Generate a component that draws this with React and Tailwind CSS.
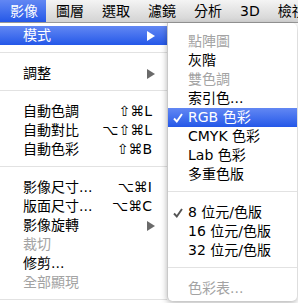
const font = { fontFamily: '"DejaVu Sans", "Noto Sans CJK TC", sans-serif' };

const barItems = ['影像', '圖層', '選取', '濾鏡', '分析', '3D', '檢視'];

const mainItems = [
  { label: '模式', arrow: true, active: true },
  { sep: true },
  { label: '調整', arrow: true },
  { sep: true },
  { label: '自動色調', key: '⇧⌘L' },
  { label: '自動對比', key: '⌥⇧⌘L' },
  { label: '自動色彩', key: '⇧⌘B' },
  { sep: true },
  { label: '影像尺寸...', key: '⌥⌘I' },
  { label: '版面尺寸...', key: '⌥⌘C' },
  { label: '影像旋轉', arrow: true },
  { label: '裁切', disabled: true },
  { label: '修剪...' },
  { label: '全部顯現', disabled: true },
  { sep: true },
];

const subItems = [
  { label: '點陣圖', disabled: true },
  { label: '灰階' },
  { label: '雙色調', disabled: true },
  { label: '索引色...' },
  { label: 'RGB 色彩', checked: true, active: true },
  { label: 'CMYK 色彩' },
  { label: 'Lab 色彩' },
  { label: '多重色版' },
  { sep: true },
  { label: '8 位元/色版', checked: true },
  { label: '16 位元/色版' },
  { label: '32 位元/色版' },
  { sep: true },
  { label: '色彩表...', disabled: true },
];

const Separator = () => (
  <div className="h-[19px] pt-[7px]">
    <div className="h-px bg-[#e2e2e2]"></div>
  </div>
);

const Triangle = ({ white }) => (
  <svg width="8" height="10" viewBox="0 0 8 10">
    <path d="M0 0 L8 5 L0 10 Z" fill={white ? '#ffffff' : '#6a6a6a'} />
  </svg>
);

const Check = ({ white }) => (
  <svg width="10" height="10" viewBox="0 0 10 10" className="shrink-0">
    <path d="M1 5.5 L3.8 8.5 L9 1" fill="none" stroke={white ? '#ffffff' : '#555555'} strokeWidth="1.9" />
  </svg>
);

const App = () => {
  return (
    <div className="w-[298px] h-[303px] overflow-hidden bg-white text-[14px] leading-[19px]" style={font}>
      {/* Menu bar */}
      <div className="flex h-[22px] bg-gradient-to-b from-[#f4f4f4] to-[#d3d3d3] border-b border-[#9a9a9a] box-content">
        {barItems.map((item, i) => (
          <div
            key={item}
            className={
              'pl-[10px] pr-[8px] shrink-0 flex items-center whitespace-nowrap ' +
              (i === 0 ? 'text-white bg-gradient-to-b from-[#6287f3] to-[#2457e8]' : 'text-black')
            }
          >
            {item}
          </div>
        ))}
      </div>

      <div className="relative">
        {/* Main menu */}
        <div className="w-[167px] pt-[3px] bg-white">
          {mainItems.map((item, i) =>
            item.sep ? (
              <Separator key={i} />
            ) : (
              <div
                key={i}
                className={
                  'h-[19px] flex items-center pl-[23px] pr-[12px] ' +
                  (item.active
                    ? 'bg-gradient-to-b from-[#6287f3] to-[#2457e8] text-white'
                    : item.disabled
                    ? 'text-[#a3a3a3]'
                    : 'text-black')
                }
              >
                <span className="flex-1 whitespace-nowrap">{item.label}</span>
                {item.key && <span className="whitespace-nowrap pr-[3px]">{item.key}</span>}
                {item.arrow && <Triangle white={item.active} />}
              </div>
            )
          )}
        </div>

        {/* Submenu */}
        <div className="absolute left-[167px] top-0 w-[130px] h-[278px] pt-[9px] bg-white border-l border-[#c9c9c9] rounded-tr-[5px] rounded-b-[5px] shadow-[0_2px_6px_rgba(0,0,0,0.3)]">
          {subItems.map((item, i) =>
            item.sep ? (
              <Separator key={i} />
            ) : (
              <div
                key={i}
                className={
                  'h-[19px] flex items-center ' +
                  (item.active
                    ? 'bg-gradient-to-b from-[#6287f3] to-[#2457e8] text-white'
                    : item.disabled
                    ? 'text-[#a3a3a3]'
                    : 'text-black')
                }
              >
                <span className="w-[20px] shrink-0 pl-[5px] flex items-center">
                  {item.checked ? <Check white={item.active} /> : null}
                </span>
                <span className="whitespace-nowrap">{item.label}</span>
              </div>
            )
          )}
        </div>
      </div>
    </div>
  );
};

export default App;
